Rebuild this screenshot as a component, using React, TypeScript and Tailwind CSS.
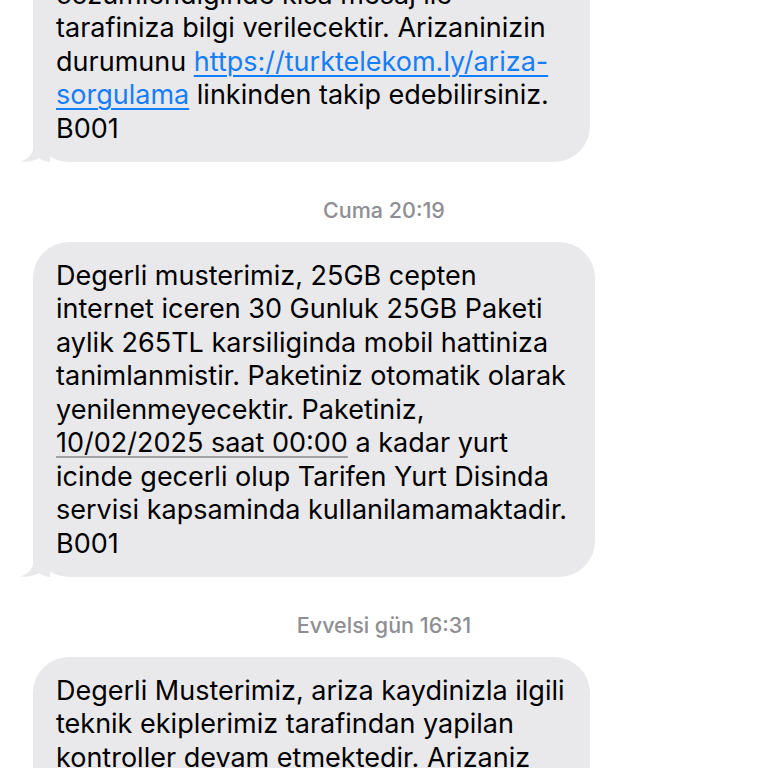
import React from "react";

type Line = React.ReactNode;

function Tail() {
  return (
    <svg
      className="absolute bottom-0 left-[-13px]"
      width="30"
      height="36"
      viewBox="0 0 30 36"
      fill="#e9e9eb"
    >
      <path d="M13 0 V22 C13 29 7 33.5 0 35.6 C7 36.2 14 35 19 32 C22 34 25 35.5 30 36 V0 Z" />
    </svg>
  );
}

function Bubble({ lines, width }: { lines: Line[]; width: string }) {
  return (
    <div className={`relative ml-[33px] ${width}`}>
      <div className="relative z-10 rounded-[36px] bg-[#e9e9eb] px-[23px] py-[16.5px] text-[27px] leading-[33.5px] text-black">
        {lines.map((l, i) => (
          <div key={i} className="whitespace-nowrap">
            {l}
          </div>
        ))}
      </div>
      <Tail />
    </div>
  );
}

function Stamp({ children }: { children: React.ReactNode }) {
  return (
    <div className="mt-[36.5px] mb-[20px] text-center text-[21.5px] leading-[24px] font-medium text-[#8e8e93]">
      {children}
    </div>
  );
}

const link = "text-[#157efb] underline decoration-[1.5px] underline-offset-[4px]";

export default function App() {
  return (
    <div
      className="h-[768px] w-[768px] overflow-hidden bg-white"
      style={{ fontFamily: "Inter, 'Noto Sans', sans-serif" }}
    >
      <div className="mt-[-39px] flex flex-col">
        <Bubble
          width="w-[557px]"
          lines={[
            "cozumlendiginde kisa mesaj ile",
            "tarafiniza bilgi verilecektir. Arizaninizin",
            <>
              durumunu <span className={link}>https://turktelekom.ly/ariza-</span>
            </>,
            <>
              <span className={link}>sorgulama</span> linkinden takip edebilirsiniz.
            </>,
            "B001",
          ]}
        />
        <Stamp>Cuma 20:19</Stamp>
        <Bubble
          width="w-[562px]"
          lines={[
            "Degerli musterimiz, 25GB cepten",
            "internet iceren 30 Gunluk 25GB Paketi",
            "aylik 265TL karsiliginda mobil hattiniza",
            "tanimlanmistir. Paketiniz otomatik olarak",
            "yenilenmeyecektir. Paketiniz,",
            <>
              <span className="underline decoration-[#a1a1a6] decoration-[1.5px] underline-offset-[4px]">
                10/02/2025 saat 00:00
              </span>{" "}
              a kadar yurt
            </>,
            "icinde gecerli olup Tarifen Yurt Disinda",
            "servisi kapsaminda kullanilamamaktadir.",
            "B001",
          ]}
        />
        <Stamp>Evvelsi gün 16:31</Stamp>
        <Bubble
          width="w-[557px]"
          lines={[
            "Degerli Musterimiz, ariza kaydinizla ilgili",
            "teknik ekiplerimiz tarafindan yapilan",
            "kontroller devam etmektedir. Arizaniz",
            "giderildiginde kisa mesaj ile bilgi",
          ]}
        />
      </div>
    </div>
  );
}
